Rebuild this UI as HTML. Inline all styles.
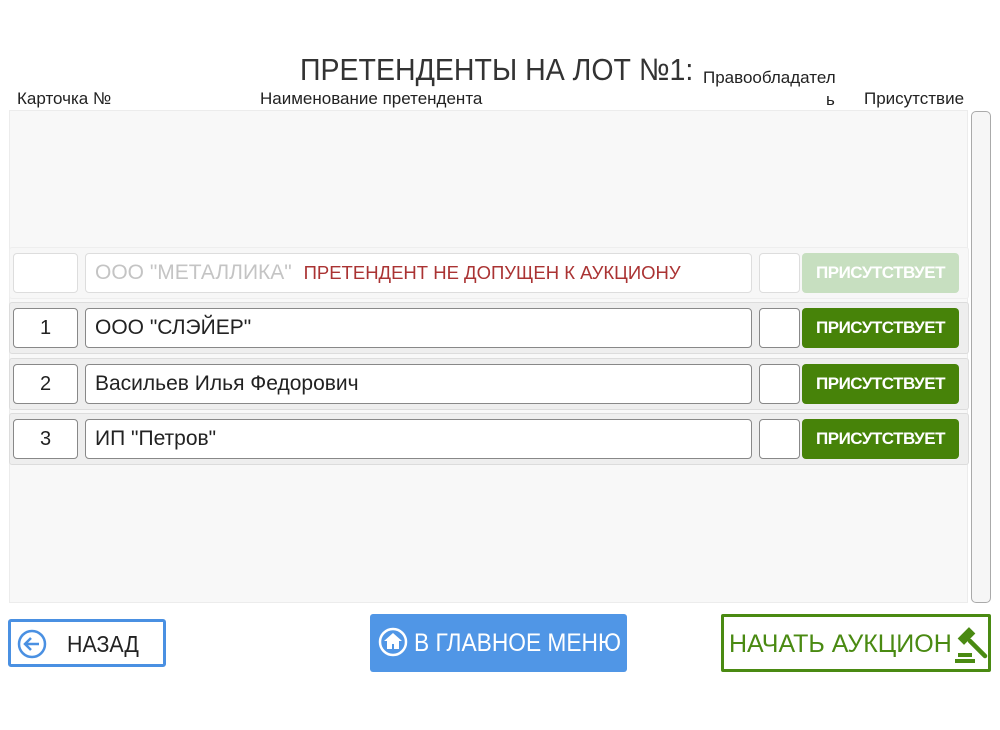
<!DOCTYPE html>
<html><head><meta charset="utf-8"><style>
*{box-sizing:border-box;margin:0;padding:0}
body{width:1000px;height:730px;background:#fff;position:relative;overflow:hidden;font-family:"Liberation Sans",sans-serif;color:#222}
.a{position:absolute}
.n{display:inline-block;transform-origin:0 50%;white-space:nowrap}
.panel{left:9px;top:110px;width:959px;height:493px;background:#f8f8f8;border:1px solid #ececec}
.sb{left:971px;top:111px;width:20px;height:492px;border:1px solid #aaa;border-radius:5px;background:#f6f6f6}
.row{left:9px;width:960px;height:52px;background:#eeeeee;border:1px solid #dcdcdc;border-radius:3px}
.box{position:absolute;top:5px;height:40px;background:#fff;border:1px solid #888;border-radius:4px}
.btn{position:absolute;top:5px;left:792px;width:157px;height:40px;background:#478309;border-radius:4px;color:#fff;font-weight:bold;font-size:17px;line-height:40px;text-align:center;letter-spacing:-0.5px}
.name{font-size:21px;line-height:38px;padding-left:9px}
.card{font-size:20px;line-height:38px;text-align:center}
</style></head><body>
<div class="a" style="left:300px;top:52px;font-size:31px;color:#333"><span class="n" style="transform:scaleX(.92)">ПРЕТЕНДЕНТЫ НА ЛОТ №1:</span></div>
<div class="a" style="left:703px;top:68px;font-size:17px"><span class="n">Правообладател</span></div>
<div class="a" style="left:826px;top:90px;font-size:17px">ь</div>
<div class="a" style="left:17px;top:89px;font-size:17px"><span class="n">Карточка №</span></div>
<div class="a" style="left:260px;top:89px;font-size:17px"><span class="n">Наименование претендента</span></div>
<div class="a" style="left:864px;top:89px;font-size:17px"><span class="n">Присутствие</span></div>
<div class="a panel"></div>
<div class="a sb"></div>

<div class="a row" style="top:247px;background:#f7f7f7;border-color:#eee">
 <div class="box" style="left:3px;width:65px;border-color:#ddd"></div>
 <div class="box name" style="left:75px;width:667px;border-color:#ddd;color:#c4c4c4">ООО "МЕТАЛЛИКА" <span style="color:#a33;font-size:18.5px;margin-left:6px">ПРЕТЕНДЕНТ НЕ ДОПУЩЕН К АУКЦИОНУ</span></div>
 <div class="box" style="left:749px;width:41px;border-color:#ddd"></div>
 <div class="btn" style="background:#c7dfc0">ПРИСУТСТВУЕТ</div>
</div>
<div class="a row" style="top:302px">
 <div class="box card" style="left:3px;width:65px">1</div>
 <div class="box name" style="left:75px;width:667px">ООО "СЛЭЙЕР"</div>
 <div class="box" style="left:749px;width:41px"></div>
 <div class="btn">ПРИСУТСТВУЕТ</div>
</div>
<div class="a row" style="top:358px">
 <div class="box card" style="left:3px;width:65px">2</div>
 <div class="box name" style="left:75px;width:667px">Васильев Илья Федорович</div>
 <div class="box" style="left:749px;width:41px"></div>
 <div class="btn">ПРИСУТСТВУЕТ</div>
</div>
<div class="a row" style="top:413px">
 <div class="box card" style="left:3px;width:65px">3</div>
 <div class="box name" style="left:75px;width:667px">ИП "Петров"</div>
 <div class="box" style="left:749px;width:41px"></div>
 <div class="btn">ПРИСУТСТВУЕТ</div>
</div>

<div class="a" style="left:8px;top:619px;width:158px;height:48px;border:3px solid #4a90e2;border-radius:3px">
 <svg class="a" style="left:6px;top:7px" width="30" height="30" viewBox="0 0 30 30"><circle cx="15" cy="15" r="13" fill="none" stroke="#4a90e2" stroke-width="2.5"/><path d="M22 15H9M14 9l-6 6 6 6" fill="none" stroke="#4a90e2" stroke-width="2.5"/></svg>
 <div class="a" style="left:56px;top:9px;font-size:23px;color:#222"><span class="n" style="transform:scaleX(.93)">НАЗАД</span></div>
</div>
<div class="a" style="left:370px;top:614px;width:257px;height:58px;background:#5096e6;border-radius:3px">
 <svg class="a" style="left:8px;top:13px" width="30" height="30" viewBox="0 0 30 30"><circle cx="15" cy="15" r="13" fill="none" stroke="#fff" stroke-width="2.5"/><path d="M15 6l-9 8h3v8h5v-5h2v5h5v-8h3z" fill="#fff"/></svg>
 <div class="a" style="left:44px;top:15px;font-size:25px;color:#fff"><span class="n" style="transform:scaleX(.91)">В ГЛАВНОЕ МЕНЮ</span></div>
</div>
<div class="a" style="left:721px;top:614px;width:270px;height:58px;border:3px solid #4a8a12;border-radius:2px">
 <div class="a" style="left:5px;top:13px;font-size:25px;color:#4a8a12"><span class="n" style="transform:scaleX(1)">НАЧАТЬ АУКЦИОН</span></div>
 <svg class="a" style="left:228px;top:8px" width="38" height="40" viewBox="0 0 38 40"><rect x="10" y="3" width="9" height="16" fill="#4a8a12" transform="rotate(45 14.5 11)"/><path d="M18 16l15 15" stroke="#4a8a12" stroke-width="4.5" stroke-linecap="round"/><path d="M6 28h14v4H6z" fill="#4a8a12"/><path d="M3 34h20v4H3z" fill="#4a8a12"/></svg>
</div>
</body></html>
